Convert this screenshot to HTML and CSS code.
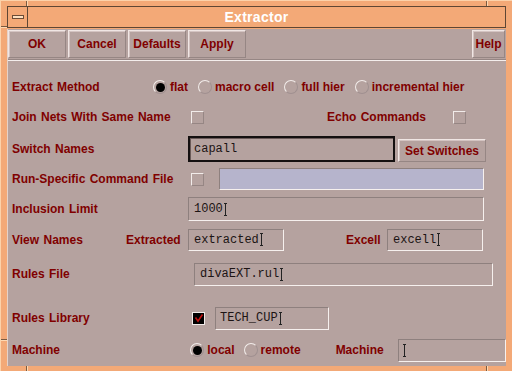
FILE: index.html
```html
<!DOCTYPE html>
<html lang="en">
<head>
  <meta charset="UTF-8" />
  <title>Extractor</title>
  <link rel="stylesheet" href="styles.css">
</head>
<body>
  <div class="window">
    <span class="notch notch-tl"></span>
    <span class="notch notch-tr"></span>
    <span class="notch notch-bl"></span>
    <span class="notch notch-br"></span>
    <span class="notch-h notch-lt"></span>
    <span class="notch-h notch-lb"></span>

    <div class="titlebar">
      <span class="menu-btn"><span class="dash"></span></span>
      <span class="title">Extractor</span>
    </div>

    <div class="panel">
      <div class="buttons">
        <button class="btn">OK</button>
        <button class="btn">Cancel</button>
        <button class="btn">Defaults</button>
        <button class="btn">Apply</button>
        <span class="spacer"></span>
        <button class="btn help">Help</button>
      </div>
      <div class="separator"></div>

      <div class="form">
        <div class="row r1">
          <span class="label method">Extract Method</span>
          <span class="choices">
            <span class="choice"><span class="radio on"></span>flat</span>
            <span class="choice"><span class="radio"></span>macro cell</span>
            <span class="choice"><span class="radio"></span>full hier</span>
            <span class="choice"><span class="radio"></span>incremental hier</span>
          </span>
        </div>

        <div class="row r2">
          <span class="label join">Join Nets With Same Name</span>
          <span class="check"></span>
          <span class="label echo">Echo Commands</span>
          <span class="check"></span>
        </div>

        <div class="row r3">
          <span class="label wide">Switch Names</span>
          <span class="field focused switch">capall</span>
          <button class="btn set">Set Switches</button>
        </div>

        <div class="row r4">
          <span class="label join">Run-Specific Command File</span>
          <span class="check"></span>
          <span class="field blue runfile"></span>
        </div>

        <div class="row r5">
          <span class="label wide">Inclusion Limit</span>
          <span class="field limit">1000<span class="caret"></span></span>
        </div>

        <div class="row r6">
          <span class="label views">View Names</span>
          <span class="label sub">Extracted</span>
          <span class="field view">extracted<span class="caret"></span></span>
          <span class="label excell">Excell</span>
          <span class="field view">excell<span class="caret"></span></span>
        </div>

        <div class="row r7">
          <span class="label rules">Rules File</span>
          <span class="field rulesfile">divaEXT.rul<span class="caret"></span></span>
        </div>

        <div class="row r8">
          <span class="label lib">Rules Library</span>
          <span class="check checked">
            <svg width="10" height="10" viewBox="0 0 10 10"><path d="M1.5 4.5 L4 8 L8.5 1.5" fill="none" stroke="#c01010" stroke-width="1.6"/></svg>
          </span>
          <span class="field tech">TECH_CUP<span class="caret"></span></span>
        </div>

        <div class="row r9">
          <span class="label lib">Machine</span>
          <span class="choice"><span class="radio on"></span>local</span>
          <span class="choice"><span class="radio"></span>remote</span>
          <span class="label mach">Machine</span>
          <span class="field machine"><span class="caret"></span></span>
        </div>
      </div>
    </div>
  </div>
</body>
</html>
```

FILE: styles.css
```css
* {
  margin: 0;
  padding: 0;
  box-sizing: border-box;
}
body {
  background: #f3a977;
  font-family: "Liberation Sans", Arial, sans-serif;
  font-weight: bold;
  font-size: 12px;
  color: #800000;
}
.window {
  position: relative;
  width: 512px;
  height: 371px;
  padding: 5px 6px 5px 7px;
  background: #f3a977;
  border-left: 1px solid #fcd2aa;
  border-top: 1px solid #fcd2aa;
  display: flex;
  flex-direction: column;
}

/* frame resize corners */
.notch {
  position: absolute;
  width: 2px;
  height: 5px;
  background: #7a5a40;
  border-right: 1px solid #ffd8b0;
}
.notch-tl { left: 25px; top: 0; }
.notch-tr { left: 485px; top: 0; }
.notch-bl { left: 25px; bottom: 0; }
.notch-br { left: 485px; bottom: 0; }
.notch-h {
  position: absolute;
  left: 0;
  width: 6px;
  height: 2px;
  background: #7a5a40;
  border-bottom: 1px solid #ffd8b0;
}
.notch-lt { top: 25px; }
.notch-lb { top: 338px; }

.titlebar {
  height: 22px;
  margin-left: -1px;
  border: 1px solid #5e4634;
  display: flex;
  align-items: center;
  background: #f3a977;
}
.menu-btn {
  width: 20px;
  height: 20px;
  border-right: 1px solid #5e4634;
  display: flex;
  align-items: center;
  justify-content: center;
}
.dash {
  width: 12px;
  height: 4px;
  background: #fde0c0;
  border: 1px solid #6a4c36;
}
.title {
  flex: 1;
  text-align: center;
  color: #fff;
  font-size: 14px;
  padding-right: 20px;
  letter-spacing: 0.3px;
}

.panel {
  flex: 1;
  margin-top: 1px;
  margin-left: -1px;
  background: #b5a29f;
  border-left: 1px solid #e6d2c8;
  display: flex;
  flex-direction: column;
}
.buttons {
  display: flex;
  gap: 2px;
  padding: 1px 1px 0 0;
  height: 30px;
}
.spacer { flex: 1; }
.btn {
  font: inherit;
  color: #800000;
  background: #b5a29f;
  width: 58px;
  height: 28px;
  border: 1px solid;
  border-color: #f0e6e4 #968684 #968684 #f0e6e4;
  box-shadow: inset 1px 1px 0 #d4c4c2;
}
.btn.help {
  width: 33px;
}
.separator {
  height: 2px;
  border-top: 1px solid #968684;
  border-bottom: 1px solid #f4eeec;
}

.form {
  display: flex;
  flex-direction: column;
  padding: 14px 0 0 4px;
}
.row {
  display: flex;
  align-items: center;
  height: 24px;
}
.r2 { margin-top: 6px; }
.r3 { margin-top: 7px; height: 26px; }
.r4 { margin-top: 5px; }
.r5 { margin-top: 6px; }
.r6 { margin-top: 7px; height: 23px; }
.r7 { margin-top: 11px; }
.r8 { margin-top: 20px; }
.r9 { margin-top: 8px; }

.label {
  white-space: nowrap;
  word-spacing: 1px;
}
.method { width: 141px; }
.join { width: 179px; }
.wide { width: 176px; }
.views { width: 114px; }
.rules { width: 182px; }
.lib { width: 180px; }
.sub { width: 62px; }
.echo { margin-left: 123px; width: 126px; }
.excell { margin-left: 62px; width: 41px; }
.mach { margin-left: 26px; width: 63px; }

.choices {
  display: flex;
  gap: 10px;
}
.choice {
  display: flex;
  align-items: center;
  gap: 3px;
  margin-right: 9px;
}
.choices .choice { margin-right: 0; }
.radio {
  width: 14px;
  height: 14px;
  border-radius: 50%;
  border: 1px solid;
  border-color: #f2ecea #a09090 #a09090 #f2ecea;
  display: flex;
  align-items: center;
  justify-content: center;
}
.radio.on::after {
  content: "";
  width: 9px;
  height: 9px;
  border-radius: 50%;
  background: #000;
}
.check {
  width: 13px;
  height: 13px;
  border: 1px solid;
  border-color: #f2ecea #968684 #968684 #f2ecea;
  flex: none;
}
.check.checked {
  background: #000;
  border-color: #f2ecea;
  display: flex;
  align-items: center;
  justify-content: center;
}
.r4 .check { margin-right: 15px; }
.r8 .check { margin-right: 10px; }

.field {
  display: flex;
  align-items: center;
  height: 22px;
  padding-left: 5px;
  font-family: "Liberation Mono", "Courier New", monospace;
  font-weight: normal;
  font-size: 12px;
  color: #1c1414;
  border: 1px solid;
  border-color: #8e807e #f6f0ee #f6f0ee #8e807e;
  white-space: nowrap;
}
.field.focused {
  border: 2px solid #141010;
  box-shadow: inset 1px 1px 0 #6a5a58;
  height: 26px;
  padding-left: 4px;
}
.switch { width: 207px; }
.field.blue {
  background: #b6b4cc;
}
.runfile { width: 265px; }
.limit { width: 296px; height: 24px; }
.view { width: 96px; }
.rulesfile { width: 299px; height: 23px; }
.tech { width: 114px; height: 23px; padding-left: 4px; }
.machine { width: 109px; height: 23px; padding-left: 3px; }

.btn.set {
  width: 88px;
  height: 23px;
  margin-left: 3px;
  margin-top: 3px;
}

.caret {
  display: inline-block;
  width: 3px;
  height: 13px;
  margin-left: 1px;
  border-top: 1px dotted #222;
  border-bottom: 1px dotted #222;
  background: linear-gradient(to right, transparent 1px, #222 1px, #222 2px, transparent 2px);
}
```
